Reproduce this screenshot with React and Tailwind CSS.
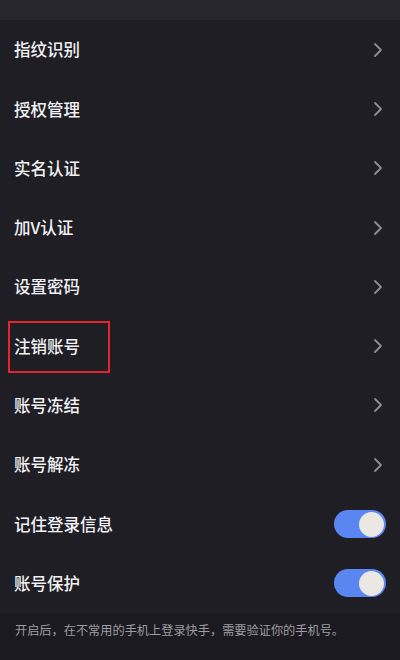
import React from "react";

const rows = [
  "指纹识别",
  "授权管理",
  "实名认证",
  "加V认证",
  "设置密码",
  "注销账号",
  "账号冻结",
  "账号解冻",
];

const Chevron = () => (
  <svg width="10" height="16" viewBox="0 0 10 16" fill="none">
    <path
      d="M2 2l6 6-6 6"
      stroke="#8e8d95"
      strokeWidth="1.8"
      strokeLinecap="round"
      strokeLinejoin="round"
    />
  </svg>
);

const Toggle = () => (
  <div className="w-[52px] h-[28px] rounded-full bg-[#5a86f2] flex items-center justify-end p-[2px]">
    <div className="w-[25px] h-[25px] rounded-full bg-[#ebe8e4]" />
  </div>
);

const App = () => {
  return (
    <div
      className="w-[400px] h-[660px] bg-[#1f1e25] text-[#f2f2f4] flex flex-col overflow-hidden"
      style={{ fontFamily: '"Noto Sans CJK SC", "Noto Sans", sans-serif' }}
    >
      <div className="h-[20px] bg-[#27262f]" />
      {rows.map((label) => (
        <div key={label} className="h-[59.3px] flex items-center justify-between pl-[14px] pr-[17px]">
          {label === "注销账号" ? (
            <span className="relative text-[16.5px] font-medium">
              {label}
              <span className="absolute left-[-6px] top-[-13px] w-[102px] h-[52px] border-[2.5px] border-[#e2262c]" />
            </span>
          ) : (
            <span className="text-[16.5px] font-medium">{label}</span>
          )}
          <Chevron />
        </div>
      ))}
      {["记住登录信息", "账号保护"].map((label) => (
        <div key={label} className="h-[59.3px] flex items-center justify-between pl-[14px] pr-[14px]">
          <span className="text-[16.5px] font-medium">{label}</span>
          <Toggle />
        </div>
      ))}
      <div className="flex-1 bg-[#1b1a20] pl-[15px] pt-[8px]">
        <p className="text-[12.2px] text-[#9d9ca3]">
          开启后，在不常用的手机上登录快手，需要验证你的手机号。
        </p>
      </div>
    </div>
  );
};

export default App;
